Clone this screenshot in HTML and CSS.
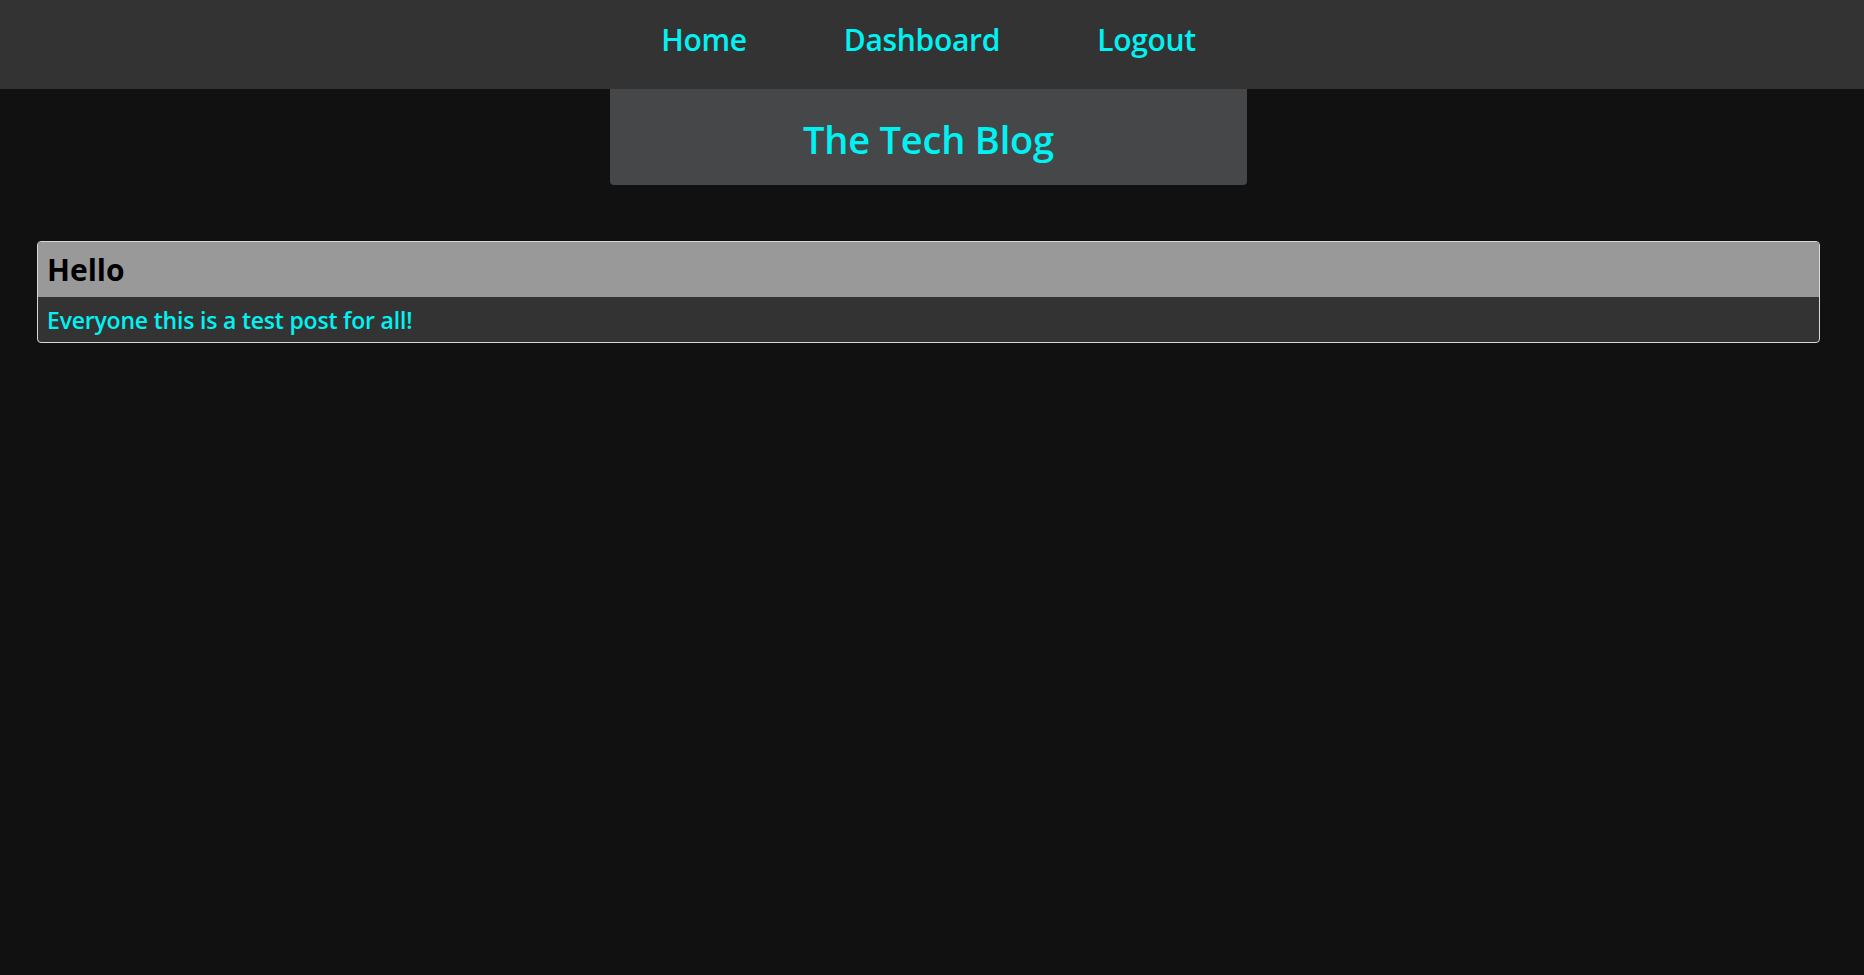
FILE: index.html
```html
<!DOCTYPE html>
<html lang="en">
<head>
<meta charset="utf-8">
<title>The Tech Blog</title>
<link rel="stylesheet" href="styles.css">
</head>
<body>
<nav class="topnav">
  <div class="nav-links">
    <a href="#" class="nav-link">Home</a>
    <a href="#" class="nav-link">Dashboard</a>
    <a href="#" class="nav-link">Logout</a>
  </div>
</nav>
<main class="page">
  <header class="brand">
    <h1 class="brand-title">The Tech Blog</h1>
  </header>
  <section class="posts">
    <article class="post">
      <h2 class="post-title">Hello</h2>
      <p class="post-body">Everyone this is a test post for all!</p>
    </article>
  </section>
</main>
</body>
</html>
```
FILE: styles.css
```css
html, body {
  margin: 0;
  padding: 0;
  background: #111111;
  font-family: "Open Sans", "Noto Sans", sans-serif;
  height: 100%;
}

.topnav {
  background: #333333;
  height: 89px;
  display: flex;
}

.nav-links {
  flex: 1;
  margin-right: 7px;
  display: flex;
  justify-content: center;
  align-items: center;
  gap: 97px;
  padding-bottom: 11px;
}

.nav-link {
  color: #00f2f2;
  text-decoration: none;
  font-size: 30px;
  font-weight: 600;
  letter-spacing: -0.3px;
}

.page {
  margin-right: 7px;
  display: flex;
  flex-direction: column;
  align-items: center;
}

.brand {
  width: 637px;
  height: 96px;
  background: #464749;
  border-radius: 0 0 4px 4px;
  display: flex;
  align-items: center;
  justify-content: center;
  padding-top: 4px;
  box-sizing: border-box;
}

.brand-title {
  margin: 0;
  color: #00f2f2;
  font-size: 38px;
  font-weight: 600;
  letter-spacing: -0.2px;
}

.posts {
  align-self: stretch;
  padding: 56px 37px 0;
}

.post {
  border: 1px solid #d8d8d8;
  border-radius: 4px;
  overflow: hidden;
  background: #333333;
}

.post-title {
  margin: 0;
  background: #999999;
  color: #000000;
  height: 55px;
  display: flex;
  align-items: center;
  padding: 0 9px;
  font-size: 30px;
  font-weight: 700;
}

.post-body {
  margin: 0;
  height: 45px;
  display: flex;
  align-items: center;
  padding: 0 9px;
  color: #00f2f2;
  font-size: 23px;
  font-weight: 600;
  letter-spacing: -0.2px;
}
```
